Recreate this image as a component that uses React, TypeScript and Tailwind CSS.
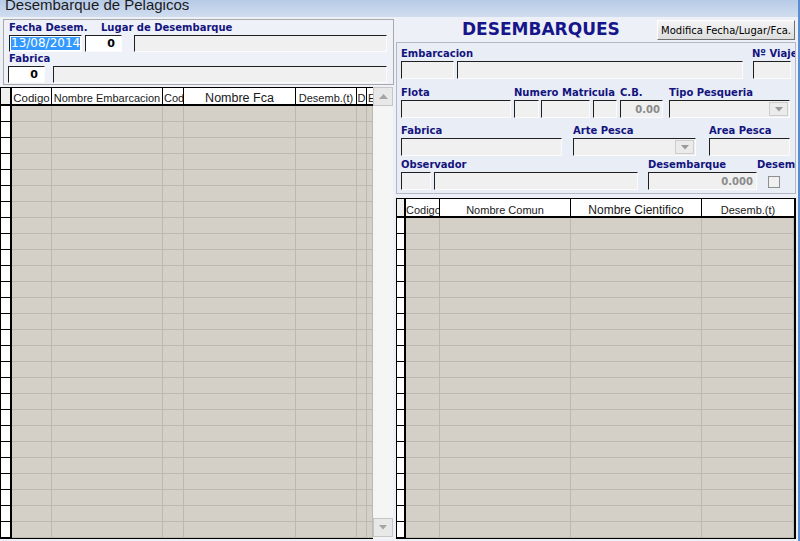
import React from "react";

const LBL =
  "font-['DejaVu_Sans',sans-serif] font-bold text-[10px] leading-[13px] h-[13px] mb-[1px] text-[#14147e] whitespace-nowrap";

function Box({ cls, children }: { cls: string; children?: React.ReactNode }) {
  return (
    <div
      className={`border border-t-[#1f1f1f] border-l-[#1f1f1f] border-r-[#fbfbfb] border-b-[#fbfbfb] overflow-hidden ${cls}`}
    >
      {children}
    </div>
  );
}

function DownTri({ color = "#9a9a9a" }: { color?: string }) {
  return (
    <svg width="8" height="5" viewBox="0 0 8 5">
      <path d="M0 0 L8 0 L4 4.5 Z" fill={color} />
    </svg>
  );
}

function UpTri({ color = "#a5a5a5" }: { color?: string }) {
  return (
    <svg width="9" height="5" viewBox="0 0 9 5">
      <path d="M0 5 L9 5 L4.5 0 Z" fill={color} />
    </svg>
  );
}

function Combo({ cls }: { cls: string }) {
  return (
    <Box cls={`h-[18px] bg-[#f0f0f0] flex justify-end items-center pr-[1px] ${cls}`}>
      <div className="w-[19px] h-[14px] bg-[#ebebeb] border border-[#cdcdcd] flex items-center justify-center">
        <DownTri />
      </div>
    </Box>
  );
}

function DataRows({
  count,
  cols,
  rh,
}: {
  count: number;
  cols: string[];
  rh: string;
}) {
  return (
    <>
      {Array.from({ length: count }).map((_, i) => (
        <div key={i} className="flex h-[16px]">
          <div className={`${rh} h-[16px] bg-white border-b border-r-2 border-black`} />
          {cols.map((c, j) => (
            <div
              key={j}
              className={`${c} h-[16px] bg-[#d4d0c8] border-b border-r border-[#bdb9b1]`}
            />
          ))}
        </div>
      ))}
    </>
  );
}

const HC =
  "h-full border-r border-black bg-white flex items-end overflow-hidden whitespace-nowrap leading-[12px] text-[#1a1a1a]";

const leftCols = [
  "w-[40px]",
  "w-[111px]",
  "w-[21px]",
  "w-[112px]",
  "w-[61px]",
  "w-[10px]",
  "w-[6px]",
];

const rightCols = ["w-[34px]", "w-[131px]", "w-[131px]", "w-[92px]"];

function LeftGrid() {
  return (
    <div className="mt-[2px] flex">
      <div className="w-[373px] border-t border-l border-b border-black">
        <div className="flex h-[18px] border-b-2 border-black">
          <div className="w-[11px] h-full bg-[#f0f0f0] border-r-2 border-black" />
          <div className={`${HC} w-[40px] justify-center text-[11.5px]`}>Codigo</div>
          <div className={`${HC} w-[111px] justify-center text-[11px]`}>Nombre Embarcacion</div>
          <div className={`${HC} w-[21px] justify-start pl-[1px] text-[11px]`}>Cod</div>
          <div className={`${HC} w-[112px] justify-center text-[12.5px]`}>Nombre Fca</div>
          <div className={`${HC} w-[61px] justify-center text-[11px]`}>Desemb.(t)</div>
          <div className={`${HC} w-[10px] justify-center text-[11px]`}>D</div>
          <div className="h-full w-[6px] bg-white flex items-end overflow-hidden leading-[12px] text-[11px] pl-[1px] text-[#1a1a1a]">
            E
          </div>
        </div>
        <DataRows count={27} cols={leftCols} rh="w-[11px]" />
      </div>
      <div className="w-[20px] flex flex-col bg-[#f4f4f4]">
        <div className="h-[19px] bg-[#e8e8e8] border border-[#c6c6c6] flex items-center justify-center">
          <UpTri />
        </div>
        <div className="h-[412px] bg-[#f5f5f5]" />
        <div className="h-[19px] bg-[#e8e8e8] border border-[#c6c6c6] flex items-center justify-center">
          <DownTri color="#a5a5a5" />
        </div>
      </div>
    </div>
  );
}

function RightGrid() {
  return (
    <div className="mt-[4px] ml-[1px] w-[400px] border-t border-l border-b border-r-2 border-black">
      <div className="flex h-[19px] border-b-2 border-black">
        <div className="w-[9px] h-full bg-[#f0f0f0] border-r-2 border-black" />
        <div className={`${HC} w-[34px] justify-start text-[11px]`}>Codigo</div>
        <div className={`${HC} w-[131px] justify-center text-[11px]`}>Nombre Comun</div>
        <div className={`${HC} w-[131px] justify-center text-[12px]`}>Nombre Cientifico</div>
        <div className="h-full w-[92px] bg-white flex items-end justify-center leading-[12px] text-[11px] text-[#1a1a1a]">
          Desemb.(t)
        </div>
      </div>
      <DataRows count={20} cols={rightCols} rh="w-[9px]" />
    </div>
  );
}

export default function App() {
  return (
    <div className="w-[800px] h-[541px] overflow-hidden flex bg-[#edf0f7] font-['Liberation_Sans',Arial,sans-serif]">
      <div className="w-[798px] flex flex-col">
        {/* Title bar */}
        <div className="h-[17px] shrink-0 overflow-hidden bg-linear-to-b from-[#b7cbe7] to-[#d0ddef] pl-[5px]">
          <div className="mt-[-4px] text-[15px] leading-[18px] text-[#1b1b1b] whitespace-nowrap">
            Desembarque de Pelagicos
          </div>
        </div>

        <div className="flex-1 flex">
          {/* Left column */}
          <div className="w-[395px] flex flex-col">
            <div className="mt-[2px] ml-[3px] w-[391px] h-[66px] border border-[#a9a9a9] bg-[#eef1f8] pl-[5px] pt-[1px]">
              <div className="flex">
                <div className={`${LBL} w-[92px]`}>Fecha Desem.</div>
                <div className={LBL}>Lugar de Desembarque</div>
              </div>
              <div className="flex">
                <Box cls="h-[17px] w-[73px] bg-white pl-[1px] pt-[1px] text-[12px] leading-[13px] whitespace-nowrap">
                  <span className="inline-block bg-[#3399ff] text-white text-[12px] leading-[13px] h-[13px] font-['DejaVu_Sans',sans-serif] whitespace-nowrap align-top">
                    13/08/2014
                  </span>
                </Box>
                <Box cls="h-[17px] w-[37px] ml-[3px] bg-white flex items-center justify-end pr-[6px] font-['DejaVu_Sans',sans-serif] font-bold text-[11px] leading-[13px] text-black">
                  0
                </Box>
                <Box cls="h-[17px] w-[253px] ml-[12px] bg-[#f0f0f0]" />
              </div>
              <div className={LBL}>Fabrica</div>
              <div className="flex ml-[-1px]">
                <Box cls="h-[17px] w-[37px] bg-white flex items-center justify-end pr-[6px] font-['DejaVu_Sans',sans-serif] font-bold text-[11px] leading-[13px] text-black">
                  0
                </Box>
                <Box cls="h-[17px] w-[334px] ml-[8px] bg-[#f0f0f0]" />
              </div>
            </div>
            <LeftGrid />
          </div>

          {/* Right column */}
          <div className="w-[403px] flex flex-col">
            <div className="h-[25px] shrink-0 flex items-start pl-[67px]">
              <div className="w-[195px] pt-[2px] font-['DejaVu_Sans',sans-serif] font-bold text-[17px] leading-[20px] text-[#16168a] whitespace-nowrap">
                DESEMBARQUES
              </div>
              <div className="mt-[3px] w-[138px] h-[20px] bg-linear-to-b from-[#f4f4f4] to-[#dedede] border border-t-[#ffffff] border-l-[#ffffff] border-r-[#707070] border-b-[#707070] flex items-center justify-center font-['DejaVu_Sans',sans-serif] text-[10px] text-black whitespace-nowrap">
                Modifica Fecha/Lugar/Fca.
              </div>
            </div>

            <div className="ml-[1px] w-[400px] h-[152px] shrink-0 border border-[#b3b8c4] bg-[#e8edf6] overflow-hidden pl-[4px] pt-[4px]">
              {/* Row 1 */}
              <div className="flex">
                <div className="w-[342px] flex flex-col">
                  <div className={LBL}>Embarcacion</div>
                  <div className="flex">
                    <Box cls="h-[18px] w-[53px] bg-[#f0f0f0]" />
                    <Box cls="h-[18px] w-[286px] ml-[3px] bg-[#f0f0f0]" />
                  </div>
                </div>
                <div className="ml-[9px] flex flex-col">
                  <div className={LBL}>Nº Viaje</div>
                  <Box cls="h-[18px] w-[38px] ml-[1px] bg-[#f0f0f0]" />
                </div>
              </div>

              {/* Row 2 */}
              <div className="flex mt-[7px]">
                <div className="w-[110px] flex flex-col">
                  <div className={LBL}>Flota</div>
                  <Box cls="h-[18px] w-[110px] bg-[#f0f0f0]" />
                </div>
                <div className="ml-[3px] w-[103px] flex flex-col">
                  <div className={LBL}>Numero Matricula</div>
                  <div className="flex">
                    <Box cls="h-[18px] w-[25px] bg-[#f0f0f0]" />
                    <Box cls="h-[18px] w-[49px] ml-[2px] bg-[#f0f0f0]" />
                    <Box cls="h-[18px] w-[24px] ml-[3px] bg-[#f0f0f0]" />
                  </div>
                </div>
                <div className="ml-[3px] w-[43px] flex flex-col">
                  <div className={LBL}>C.B.</div>
                  <Box cls="h-[18px] w-[43px] bg-[#f0f0f0] flex items-center justify-end pr-[2px] font-['DejaVu_Sans',sans-serif] font-bold text-[10px] text-[#8a8a8a]">
                    0.00
                  </Box>
                </div>
                <div className="ml-[6px] w-[121px] flex flex-col">
                  <div className={LBL}>Tipo Pesqueria</div>
                  <Combo cls="w-[121px]" />
                </div>
              </div>

              {/* Row 3 */}
              <div className="flex mt-[6px]">
                <div className="w-[161px] flex flex-col">
                  <div className={LBL}>Fabrica</div>
                  <Box cls="h-[18px] w-[161px] bg-[#f0f0f0]" />
                </div>
                <div className="ml-[11px] w-[123px] flex flex-col">
                  <div className={LBL}>Arte Pesca</div>
                  <Combo cls="w-[123px]" />
                </div>
                <div className="ml-[13px] w-[81px] flex flex-col">
                  <div className={LBL}>Area Pesca</div>
                  <Box cls="h-[18px] w-[81px] bg-[#f0f0f0]" />
                </div>
              </div>

              {/* Row 4 */}
              <div className="flex mt-[2px]">
                <div className="w-[237px] flex flex-col">
                  <div className={LBL}>Observador</div>
                  <div className="flex">
                    <Box cls="h-[18px] w-[30px] bg-[#f0f0f0]" />
                    <Box cls="h-[18px] w-[204px] ml-[3px] bg-[#f0f0f0]" />
                  </div>
                </div>
                <div className="ml-[10px] w-[109px] flex flex-col">
                  <div className={LBL}>Desembarque</div>
                  <Box cls="h-[18px] w-[109px] bg-[#f0f0f0] flex items-center justify-end pr-[3px] font-['DejaVu_Sans',sans-serif] font-bold text-[10px] text-[#8a8a8a]">
                    0.000
                  </Box>
                </div>
                <div className="flex flex-col">
                  <div className={LBL}>Desem</div>
                  <div className="ml-[11px] mt-[4px] w-[12px] h-[12px] border border-[#8e8f8f] bg-[#f0f0f0]" />
                </div>
              </div>
            </div>

            <RightGrid />
          </div>
        </div>
      </div>
      <div className="w-[2px] bg-[#5a8ed0]" />
    </div>
  );
}
